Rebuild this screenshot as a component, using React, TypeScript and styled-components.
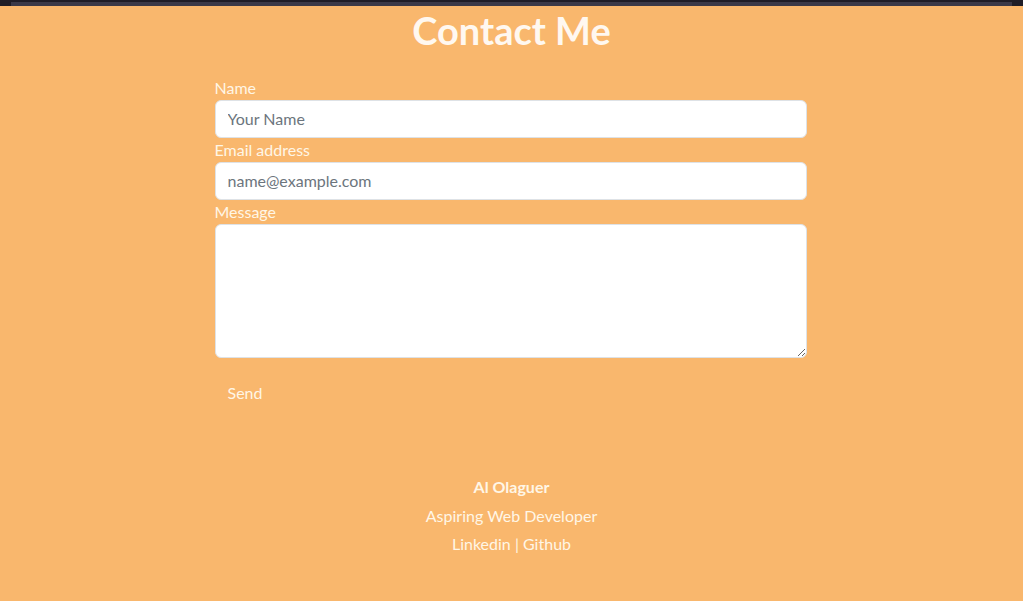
import React from 'react';
import styled, { createGlobalStyle } from 'styled-components';

const GlobalStyle = createGlobalStyle`
  html, body {
    margin: 0;
    padding: 0;
    background: #f9b76d;
  }
  body {
    font-family: Lato, "Noto Sans", sans-serif;
    color: #fff;
  }
  * { box-sizing: border-box; }
`;

const TopEdge = styled.div`
  height: 6px;
  background: #1f1d27;
  padding: 2px 11px 0;
  display: flex;
`;

const TopBar = styled.div`
  flex: 1;
  background: #3b3948;
`;

const Page = styled.main`
  display: flex;
  flex-direction: column;
  align-items: center;
`;

const Title = styled.h1`
  margin: 2px 0 22px;
  font-size: 38px;
  font-weight: 700;
  line-height: 1.2;
  color: #fff8f0;
`;

const Form = styled.form`
  width: 592px;
  margin-right: 2px;
  display: flex;
  flex-direction: column;
`;

const Label = styled.label`
  display: block;
  font-size: 16px;
  line-height: 24px;
  color: #fff6e6;
`;

const Field = styled.input`
  display: block;
  width: 100%;
  height: 38px;
  padding: 6px 12px;
  font: inherit;
  font-size: 16px;
  line-height: 24px;
  color: #212529;
  background: #fff;
  border: 1px solid #dee2e6;
  border-radius: 6px;
  outline: none;
  &::placeholder { color: #6c757d; }
`;

const Area = styled.textarea`
  display: block;
  width: 100%;
  height: 134px;
  padding: 6px 12px;
  font: inherit;
  font-size: 16px;
  line-height: 24px;
  background: #fff;
  border: 1px solid #dee2e6;
  border-radius: 6px;
  outline: none;
  resize: vertical;
  margin-bottom: 16px;
`;

const SendButton = styled.button`
  align-self: flex-start;
  height: 38px;
  padding: 6px 12px;
  font: inherit;
  font-size: 16px;
  line-height: 24px;
  color: #fff6e6;
  background: transparent;
  border: 1px solid transparent;
  border-radius: 6px;
  cursor: pointer;
`;

const Footer = styled.footer`
  margin-top: 63px;
  display: flex;
  flex-direction: column;
  align-items: center;
  font-size: 16px;
  color: #fff6e6;
`;

const FooterLine = styled.p<{ $bold?: boolean }>`
  margin: 0 0 4px;
  line-height: 24px;
  font-size: 16px;
  font-weight: ${p => (p.$bold ? 700 : 400)};
  &:first-child { margin-bottom: 5px; }
`;

const FooterLink = styled.a`
  color: inherit;
  text-decoration: none;
`;

export default function App() {
  return (
    <>
      <GlobalStyle />
      <TopEdge>
        <TopBar />
      </TopEdge>
      <Page>
        <Title>Contact Me</Title>
        <Form onSubmit={e => e.preventDefault()}>
          <Label htmlFor="name">Name</Label>
          <Field id="name" type="text" placeholder="Your Name" />
          <Label htmlFor="email">Email address</Label>
          <Field id="email" type="email" placeholder="name@example.com" />
          <Label htmlFor="message">Message</Label>
          <Area id="message" rows={5} />
          <SendButton type="submit">Send</SendButton>
        </Form>
        <Footer>
          <FooterLine $bold>Al Olaguer</FooterLine>
          <FooterLine>Aspiring Web Developer</FooterLine>
          <FooterLine>
            <FooterLink href="#">Linkedin</FooterLink> | <FooterLink href="#">Github</FooterLink>
          </FooterLine>
        </Footer>
      </Page>
    </>
  );
}
